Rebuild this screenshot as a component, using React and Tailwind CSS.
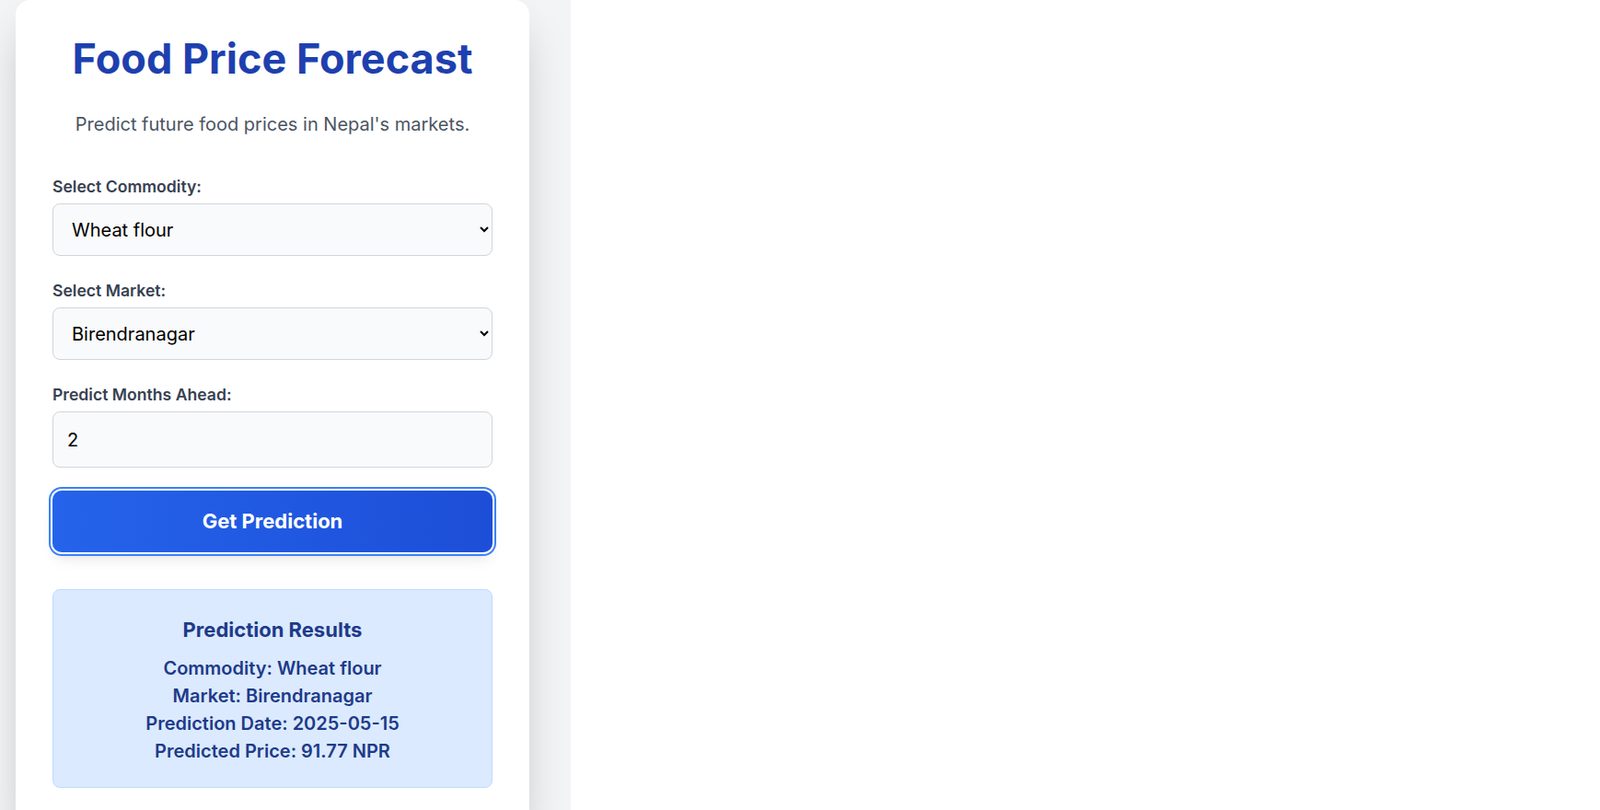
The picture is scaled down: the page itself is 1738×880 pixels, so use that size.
import React, { useState } from 'react';

const font = { fontFamily: 'Inter, "Noto Sans", sans-serif' };

function Field({ label, children }) {
  return (
    <div className="mb-[26px]">
      <label className="block text-[17.6px] leading-[24px] font-semibold text-[#374151] mb-[6px]">{label}</label>
      {children}
    </div>
  );
}

export default function App() {
  const [commodity, setCommodity] = useState('Wheat flour');
  const [market, setMarket] = useState('Birendranagar');
  const [months, setMonths] = useState('2');

  return (
    <div className="flex min-h-screen bg-white" style={font}>
      <div className="w-[620px] bg-[#f3f4f6] pl-[17px] overflow-hidden">
        <div className="w-[558px] bg-white rounded-2xl shadow-2xl px-10 pt-[37px] pb-10">
          <h1 className="text-center text-[45px] leading-[54px] font-bold text-[#1e40af]">Food Price Forecast</h1>
          <p className="text-center text-[20px] leading-[28px] text-[#4b5563] mt-[30px] mb-[42px]">
            Predict future food prices in Nepal's markets.
          </p>

          <Field label="Select Commodity:">
            <select
              value={commodity}
              onChange={(e) => setCommodity(e.target.value)}
              className="block w-full h-[57px] px-4 text-[20px] text-black bg-[#f9fafb] border border-[#d1d5db] rounded-lg"
            >
              <option>Wheat flour</option>
              <option>Rice (coarse)</option>
              <option>Lentils</option>
            </select>
          </Field>

          <Field label="Select Market:">
            <select
              value={market}
              onChange={(e) => setMarket(e.target.value)}
              className="block w-full h-[57px] px-4 text-[20px] text-black bg-[#f9fafb] border border-[#d1d5db] rounded-lg"
            >
              <option>Birendranagar</option>
              <option>Kathmandu</option>
              <option>Nepalgunj</option>
            </select>
          </Field>

          <div className="mb-[25px]">
            <label className="block text-[17.6px] leading-[24px] font-semibold text-[#374151] mb-[6px]">Predict Months Ahead:</label>
            <input
              type="number"
              value={months}
              onChange={(e) => setMonths(e.target.value)}
              className="block w-full h-[61px] px-[15px] text-[20px] text-black bg-[#f9fafb] border border-[#d1d5db] rounded-lg outline-none"
            />
          </div>

          <button className="block w-full h-[67px] rounded-[10px] bg-gradient-to-r from-[#2563eb] to-[#1d4ed8] text-white text-[22px] font-bold shadow-lg ring-2 ring-[#3b82f6] ring-offset-2">
            Get Prediction
          </button>

          <div className="mt-10 bg-[#dbeafe] border border-[#bfdbfe] rounded-lg pt-[28px] pb-[24px] text-center text-[#1e3a8a]">
            <h2 className="text-[22px] leading-[30px] font-bold mb-[12px]">Prediction Results</h2>
            <div className="text-[20px] leading-[30px] font-semibold">
              <p>Commodity: {commodity}</p>
              <p>Market: {market}</p>
              <p>Prediction Date: 2025-05-15</p>
              <p>Predicted Price: 91.77 NPR</p>
            </div>
          </div>
        </div>
      </div>
      <div className="flex-1" />
    </div>
  );
}
